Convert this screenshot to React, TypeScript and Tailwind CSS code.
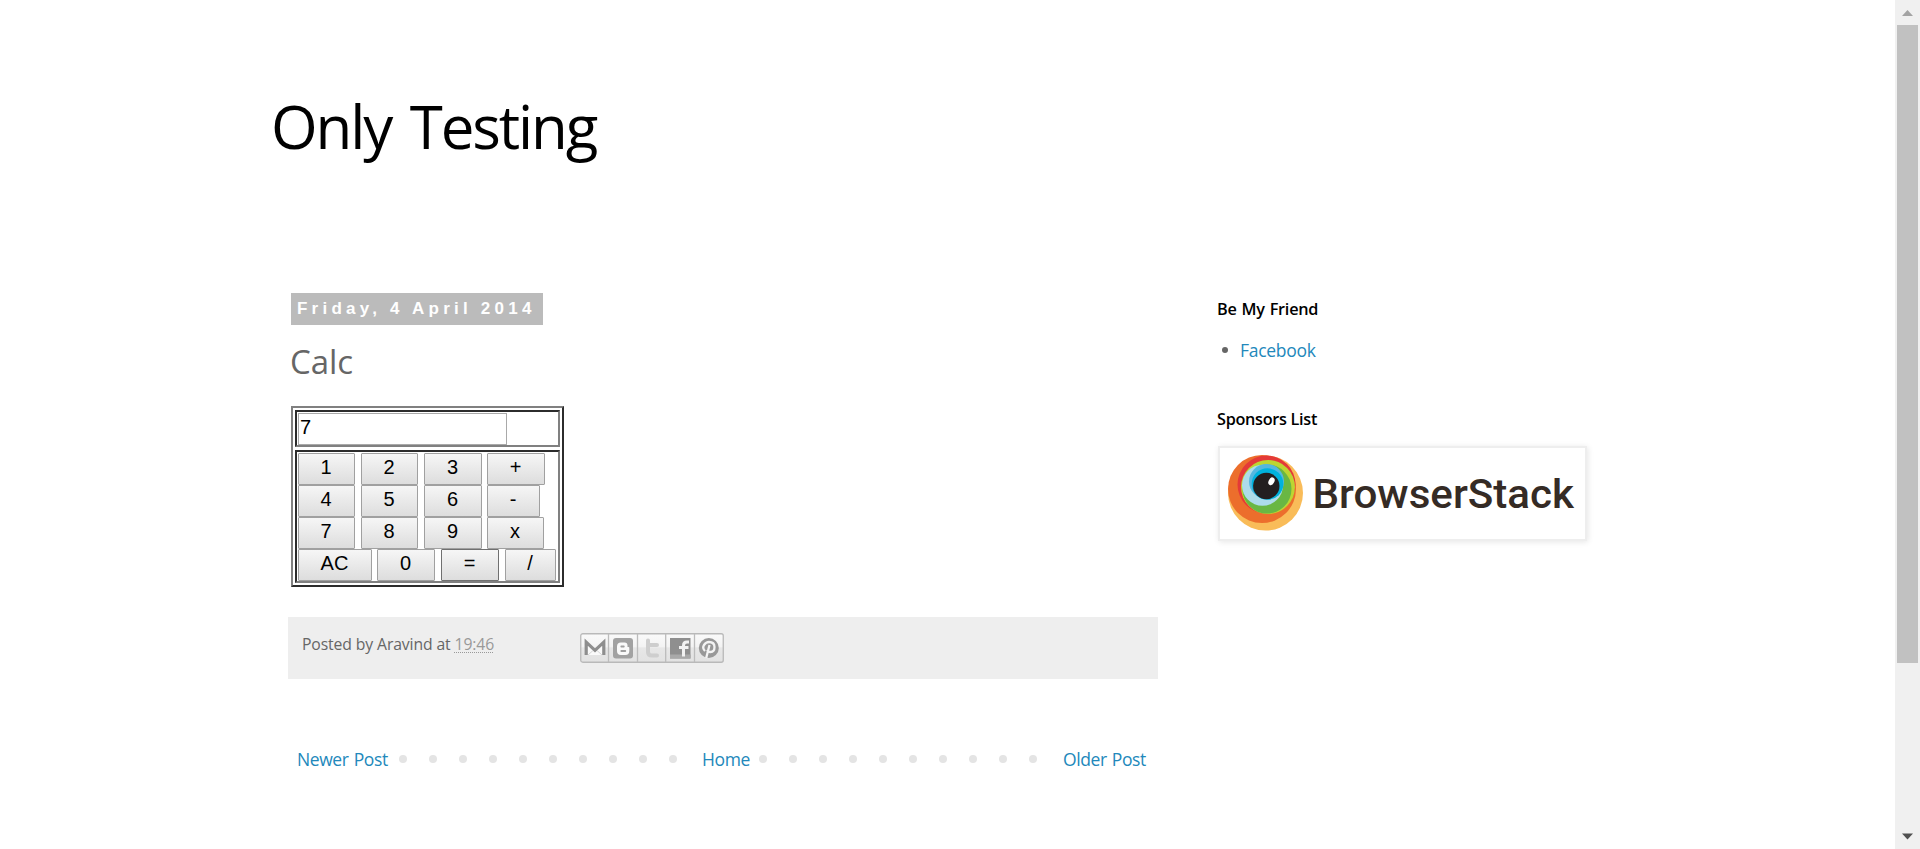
import React from 'react';

const keyBase =
  'flex h-8 items-center justify-center rounded-[1px] border bg-linear-to-b from-[#f6f6f6] to-[#dddddd] pb-[4px] pr-px text-[20px] leading-none text-black';

function Key({ label, width, focused = false }: { label: string; width: string; focused?: boolean }) {
  return <button className={`${keyBase} ${focused ? 'border-[#707070]' : 'border-[#a0a0a0]'} ${width}`}>{label}</button>;
}

function Calculator() {
  return (
    <div className="ml-[3px] mt-6 flex h-[181px] w-[273px] flex-col gap-[3px] border-2 border-b-[#2c2c2c] border-l-[#808080] border-r-[#2c2c2c] border-t-[#808080] p-[2px] font-['Liberation_Sans',Arial,sans-serif]">
      <div className="h-[37px] border-2 border-b-[#808080] border-l-[#2c2c2c] border-r-[#808080] border-t-[#2c2c2c] p-[1px]">
        <div className="flex h-8 w-[209px] items-center border border-[#a9a9a9] pb-[4px] pl-px text-[20px] leading-none text-black">7</div>
      </div>
      <div className="h-[133px] border-2 border-b-[#808080] border-l-[#2c2c2c] border-r-[#808080] border-t-[#2c2c2c] p-[1px]">
        <div className="flex gap-[6px]">
          <Key label="1" width="w-[57px]" />
          <Key label="2" width="w-[57px]" />
          <Key label="3" width="w-[58px]" />
          <Key label="+" width="-ml-px w-[58px]" />
        </div>
        <div className="flex gap-[6px]">
          <Key label="4" width="w-[57px]" />
          <Key label="5" width="w-[57px]" />
          <Key label="6" width="w-[58px]" />
          <Key label="-" width="-ml-px w-[53px]" />
        </div>
        <div className="flex gap-[6px]">
          <Key label="7" width="w-[57px]" />
          <Key label="8" width="w-[57px]" />
          <Key label="9" width="w-[58px]" />
          <Key label="x" width="-ml-px w-[57px]" />
        </div>
        <div className="flex gap-[6px]">
          <Key label="AC" width="w-[74px]" />
          <Key label="0" width="-ml-px w-[58px]" />
          <Key label="=" width="w-[58px]" focused />
          <Key label="/" width="w-[51px]" />
        </div>
      </div>
    </div>
  );
}

function ShareButtons() {
  return (
    <svg width="144" height="30" viewBox="0 0 144 30" aria-label="Share">
      <defs>
        <linearGradient id="share" x1="0" y1="0" x2="0" y2="1">
          <stop offset="0" stopColor="#fafafa" />
          <stop offset="0.45" stopColor="#f3f3f3" />
          <stop offset="0.5" stopColor="#e7e7e7" />
          <stop offset="1" stopColor="#e2e2e2" />
        </linearGradient>
      </defs>
      <rect x="0.75" y="0.75" width="142.5" height="28.5" rx="2" fill="url(#share)" stroke="#b9b9b9" strokeWidth="1.3" />
      <path d="M28.5 1v28M57.5 1v28M85.7 1v28M114.5 1v28" stroke="#bcbcbc" strokeWidth="1.3" />
      <path d="M5 22V8.5l10 8 10-8V22" fill="#fafafa" />
      <path d="M6.2 22V9.2l8.8 8.2 8.8-8.2V22" fill="none" stroke="#8e8e8e" strokeWidth="3.2" />
      <path d="M8 22l5-4.5M22 22l-5-4.5" stroke="#d5d5d5" />
      <rect x="33" y="5" width="20" height="20.5" rx="3" fill="#a2a2a2" />
      <path d="M41 9.5h3.5a3 3 0 0 1 3 3v1.4h1a.8.8 0 0 1 .8.8v3.3a4 4 0 0 1-4 4H41a4 4 0 0 1-4-4v-4.5a4 4 0 0 1 4-4z" fill="#fafafa" />
      <path d="M41.3 13.5h2.5M41.3 18h4" stroke="#9f9f9f" strokeWidth="1.8" strokeLinecap="round" />
      <path d="M68 7.500v11.500q0 3.500 4 3.500h5M68 12h9" fill="none" stroke="#cecece" strokeWidth="4" strokeLinecap="round" />
      <rect x="90" y="5" width="20.5" height="20.5" fill="#8f8f8f" />
      <path d="M90 21.5h20.5v4H90z" fill="#a9a9a9" />
      <path d="M103.500 23.500V12.500q0-3.500 3.500-3.500h2M99 14.500h9.500" fill="none" stroke="#f2f2f2" strokeWidth="3" />
      <circle cx="128.8" cy="15" r="10" fill="#989898" />
      <path d="M125 18q-3-3-1-6t5-3q5.5 0 5.5 5t-4 5q-3 0-3-2M129.5 12l-3.3 13" fill="none" stroke="#f3f3f3" strokeWidth="2.3" />
    </svg>
  );
}

function Dots() {
  return (
    <div className="flex gap-[22px]">
      {Array.from({ length: 10 }, (_, i) => (
        <span key={i} className="size-2 rounded-full bg-[#e4e4e4]" />
      ))}
    </div>
  );
}

function BrowserStackLogo() {
  return (
    <svg width="365" height="91" viewBox="1220 448 365 91">
      <circle cx="1265.5" cy="493" r="37.5" fill="#f9bc59" />
      <circle cx="1262" cy="489" r="34" fill="#ec6e2c" />
      <circle cx="1266.5" cy="484.5" r="29" fill="#e43a38" />
      <circle cx="1268" cy="487" r="27" fill="#bdd532" />
      <circle cx="1267" cy="489" r="24.500" fill="#69b743" />
      <circle cx="1262.5" cy="485.3" r="20.5" fill="#addcea" />
      <circle cx="1266.5" cy="481.5" r="17.5" fill="#55b7df" />
      <circle cx="1267.5" cy="484" r="15.8" fill="#00b2dd" />
      <circle cx="1266.3" cy="486" r="13.2" fill="#231f20" />
      <ellipse cx="1271.5" cy="481.3" rx="2.8" ry="4.1" transform="rotate(28 1271.5 481.3)" fill="#fff" />
      <text x="1312.500" y="507.5" textLength="261.500" lengthAdjust="spacingAndGlyphs" fontFamily="Roboto, sans-serif" fontWeight="500" fontSize="40.5" fill="#352b25">
        BrowserStack
      </text>
    </svg>
  );
}

function Scrollbar() {
  return (
    <div className="flex w-[25px] flex-col items-center bg-[#f0f0f0]">
      <svg width="25" height="25" viewBox="0 0 25 25">
        <path d="M7 16h11l-5.500-6z" fill="#a3a3a3" />
      </svg>
      <div className="h-[638px] w-[21px] bg-[#c1c1c1]" />
      <svg className="mt-auto" width="25" height="25" viewBox="0 0 25 25">
        <path d="M7 9.500h11l-5.500 6z" fill="#505050" />
      </svg>
    </div>
  );
}

export default function App() {
  return (
    <div className="flex h-[849px] w-full overflow-hidden bg-white font-['Open_Sans',sans-serif] text-[#666666]">
      <div className="flex-1">
        <header className="h-[293px] pl-[271px] pt-[86px]">
          <h1 className="text-[60px] leading-[80px] tracking-[-2.1px] text-black [word-spacing:5px]">Only Testing</h1>
        </header>
        <div className="flex pl-[288px]">
          <main className="w-[870px]">
            <h2 className="ml-[3px] h-8 w-[252px] whitespace-nowrap bg-[#bbbbbb] pl-[6px] font-['Liberation_Sans',Arial,sans-serif] text-[17px] font-bold leading-[31px] tracking-[4.23px] text-white">
              Friday, 4 April 2014
            </h2>
            <h3 className="ml-[2px] mt-[17px] text-[33px] leading-10 tracking-[-0.1px]">Calc</h3>
            <Calculator />
            <footer className="mt-[30px] flex h-[62px] bg-[#eeeeee] pl-[14px] pt-4">
              <div className="w-[278px] whitespace-nowrap text-[15.75px] leading-[23px] tracking-[-0.12px]">
                Posted by Aravind at <span className="text-[#999999] underline decoration-dotted decoration-1 underline-offset-2">19:46</span>
              </div>
              <ShareButtons />
            </footer>
            <nav className="mt-[68px] flex items-center pl-[9px] text-[17.5px] leading-6 tracking-[-0.4px] text-[#2288bb]">
              <a className="w-[102px] whitespace-nowrap [word-spacing:1px]">Newer Post</a>
              <Dots />
              <a className="ml-[25px] w-[57px] whitespace-nowrap">Home</a>
              <Dots />
              <a className="ml-[26px] whitespace-nowrap [word-spacing:1px]">Older Post</a>
            </nav>
          </main>
          <aside className="ml-[60px] w-[369px] pt-[6px]">
            <h2 className="-ml-px text-[16.25px] font-semibold leading-5 tracking-[-0.25px] text-black [word-spacing:1px]">Be My Friend</h2>
            <ul className="mt-[19px] flex items-center gap-[18px] pl-1 text-[17.5px] leading-6">
              <li className="size-[6px] rounded-full bg-[#666666]" />
              <li className="-ml-[6px] tracking-[-0.3px] text-[#2288bb]">Facebook</li>
            </ul>
            <h2 className="-ml-px mt-[47px] text-[16.25px] font-semibold leading-5 tracking-[-0.3px] text-black">Sponsors List</h2>
            <div className="mt-[17px] h-[95px] border-2 border-[#eeeeee] shadow-[1px_1px_6px_rgba(0,0,0,0.1)]">
              <BrowserStackLogo />
            </div>
          </aside>
        </div>
      </div>
      <Scrollbar />
    </div>
  );
}
